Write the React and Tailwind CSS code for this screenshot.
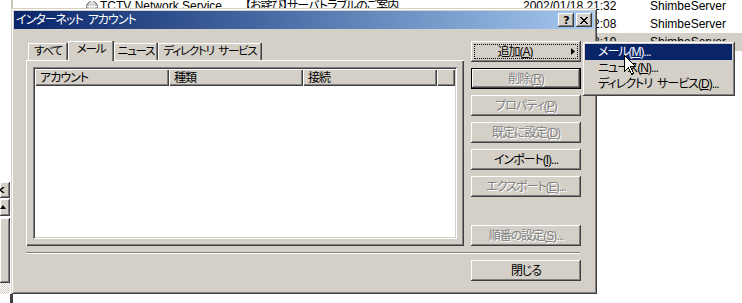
import React from 'react';

const ui = "font-['Liberation_Sans','Noto_Sans_CJK_JP',sans-serif] [font-feature-settings:'palt']";
const bevel = 'shadow-[inset_-1px_-1px_0_#404040,inset_1px_1px_0_#ffffff,inset_-2px_-2px_0_#808080,inset_2px_2px_0_#d4d0c8]';
const bevelDefault = 'shadow-[inset_0_0_0_1px_#000000,inset_-2px_-2px_0_#404040,inset_2px_2px_0_#ffffff,inset_-3px_-3px_0_#808080,inset_3px_3px_0_#d4d0c8]';

const Btn = ({ children, disabled, isDefault, focused, arrow, className = '' }) => (
  <div
    className={`relative flex h-[21px] w-[110px] shrink-0 items-center justify-center whitespace-nowrap bg-[#d4d0c8] text-[12px] leading-none ${
      isDefault ? bevelDefault : bevel
    } ${disabled ? 'text-[#808080] [text-shadow:1px_1px_0_#ffffff]' : 'text-black'} ${arrow ? 'pr-[22px]' : ''} ${className}`}
  >
    {focused && <div className="absolute inset-[3px] border border-dotted border-black" />}
    <span>{children}</span>
    {arrow && (
      <svg className="absolute right-[6px] top-[7px]" width="4" height="7" viewBox="0 0 4 7">
        <path d="M0 0 L4 3.5 L0 7 Z" fill="#000" />
      </svg>
    )}
  </div>
);

const Tab = ({ label, active, w }) => (
  <div
    className={`flex items-center justify-center whitespace-nowrap bg-[#d4d0c8] text-[11.5px] tracking-[-1.2px] text-black shadow-[inset_-1px_0_0_#404040,inset_-2px_0_0_#808080,inset_1px_1px_0_#ffffff] ${
      active ? 'relative z-10 mb-[-1px] h-[20px] pb-[2px]' : 'h-[17px]'
    } ${w}`}
  >
    {label}
  </div>
);

const HeaderCell = ({ label, w }) => (
  <div
    className={`flex h-full items-center pl-[5px] text-[12px] text-black shadow-[inset_1px_1px_0_#ffffff,inset_-1px_-1px_0_#404040,inset_-2px_-2px_0_#808080] ${w}`}
  >
    {label}
  </div>
);

const Row = ({ subject, date, from, selected, icon }) => (
  <div className={`flex h-[18px] items-center text-[12px] text-black ${selected ? 'bg-[#d4d0c8]' : ''}`}>
    <div className="w-[73px]" />
    <div className="flex w-[14px] items-center">
      {icon && (
        <svg width="12" height="11" viewBox="0 0 12 11">
          <ellipse cx="6" cy="5.5" rx="5.5" ry="5" fill="#b8b8b8" stroke="#6f6f6f" strokeWidth="1" />
          <path d="M1 5.5 H11 M6 0.5 V10.5" stroke="#ffffff" strokeWidth="1" />
          <ellipse cx="6" cy="5.5" rx="2.4" ry="5" fill="none" stroke="#ffffff" strokeWidth="1" />
        </svg>
      )}
    </div>
    <div className="w-[145px] whitespace-nowrap">TCTV Network Service</div>
    <div className="w-[278px] whitespace-nowrap tracking-[-1px]">{subject}</div>
    <div className="w-[127px] whitespace-nowrap">{date}</div>
    <div className="whitespace-nowrap">{from}</div>
  </div>
);

export default function App() {
  return (
    <div className={`relative h-[303px] w-[742px] overflow-hidden bg-white ${ui}`}>
      {/* background mail list */}
      <div className="absolute left-[13px] right-0 top-[-3px] flex flex-col">
        <Row icon subject="【お詫び】サーバトラブルのご案内" date="2002/01/18 21:32" from="ShimbeServer" />
        <Row subject="【ご案内】メンテナンスのお知らせ" date="2002/01/18 22:08" from="ShimbeServer" />
        <Row selected subject="【ご案内】サービス再開のお知らせ" date="2002/01/18 22:19" from="ShimbeServer" />
      </div>

      {/* background left pane */}
      <div className="absolute left-0 top-0 flex h-full w-[13px] flex-col">
        <div className="h-[182px] w-full border-r-2 border-[#c8c4bc] bg-white" />
        <div className={`relative h-[16px] w-[10px] bg-[#d4d0c8] ${bevel}`}>
          <svg className="absolute left-0 top-[5px]" width="5" height="6" viewBox="0 0 5 6">
            <path d="M4 0 L0 3 L4 6" stroke="#000" strokeWidth="1.5" fill="none" />
          </svg>
        </div>
        <div className={`relative mt-[1px] h-[17px] w-[10px] bg-[#d4d0c8] ${bevel}`}>
          <svg className="absolute left-0 top-[6px]" width="6" height="4" viewBox="0 0 6 4">
            <path d="M0 4 L3 0 L6 4 Z" fill="#000" />
          </svg>
        </div>
        <div className={`mt-[2px] h-[65px] w-[10px] bg-[#d4d0c8] ${bevel}`} />
        <div className="h-[11px] w-[10px] bg-[repeating-conic-gradient(#d4d0c8_0_25%,#ffffff_0_50%)] bg-[length:2px_2px]" />
        <div className="flex-1 border-r-[3px] border-[#404040] bg-white" />
      </div>

      {/* dialog */}
      <div className="absolute left-[11px] top-[8px] flex h-[286px] w-[586px] flex-col bg-[#d4d0c8] p-[3px] tracking-[-1px] shadow-[inset_1px_1px_0_#d4d0c8,inset_-1px_-1px_0_#404040,inset_2px_2px_0_#ffffff,inset_-2px_-2px_0_#808080]">
        <div className="flex h-[18px] items-center bg-linear-to-r from-[#0a246a] to-[#a6caf0] pl-[2px] pr-[2px]">
          <span className="whitespace-nowrap text-[12px] leading-none text-white">インターネット{'\u2002'}アカウント</span>
          <div className="ml-auto flex gap-[2px]">
            <div className={`flex h-[14px] w-[16px] items-center justify-center bg-[#d4d0c8] ${bevel}`}>
              <span className="font-['DejaVu_Sans',sans-serif] text-[11px] leading-none font-bold text-black">?</span>
            </div>
            <div className={`flex h-[14px] w-[16px] items-center justify-center bg-[#d4d0c8] ${bevel}`}>
              <svg width="8" height="7" viewBox="0 0 8 7" shapeRendering="crispEdges">
                <path d="M0.5 0 L7.5 7 M7.5 0 L0.5 7" stroke="#000" strokeWidth="1.8" />
              </svg>
            </div>
          </div>
        </div>

        <div className="flex flex-col pl-[12px] pt-[12px]">
          <div className="flex gap-[7px]">
            <div className="flex w-[438px] flex-col">
              <div className="flex h-[19px] items-end pl-[2px]">
                <Tab label="すべて" w="w-[40px]" />
                <Tab label="メール" w="w-[46px]" active />
                <Tab label="ニュース" w="w-[44px]" />
                <Tab label={`ディレクトリ\u2002サービス`} w="w-[104px]" />
              </div>
              <div className="h-[186px] p-[7px] shadow-[inset_1px_1px_0_#ffffff,inset_-1px_-1px_0_#404040,inset_-2px_-2px_0_#808080]">
                <div className="flex h-[172px] flex-col p-[2px] shadow-[inset_1px_1px_0_#808080,inset_-1px_-1px_0_#ffffff,inset_2px_2px_0_#404040,inset_-2px_-2px_0_#d4d0c8]">
                  <div className="flex h-[17px] bg-[#d4d0c8]">
                    <HeaderCell label="アカウント" w="w-[134px]" />
                    <HeaderCell label="種類" w="w-[134px]" />
                    <HeaderCell label="接続" w="w-[134px]" />
                    <HeaderCell label="" w="flex-1" />
                  </div>
                  <div className="flex-1 bg-white" />
                </div>
              </div>
            </div>

            <div className="flex h-[205px] w-[110px] flex-col gap-[6px]">
              <Btn focused arrow>追加(<u>A</u>)</Btn>
              <Btn disabled isDefault>削除(<u>R</u>)</Btn>
              <Btn disabled>プロパティ(<u>P</u>)</Btn>
              <Btn disabled>既定に設定(<u>D</u>)</Btn>
              <Btn>インポート(<u>I</u>)...</Btn>
              <Btn disabled>エクスポート(<u>E</u>)...</Btn>
              <Btn disabled className="mt-auto">順番の設定(<u>S</u>)...</Btn>
            </div>
          </div>

          <div className="mt-[6px] h-[2px] w-[554px] border-t border-b border-t-[#808080] border-b-white" />

          <div className="mt-[6px] flex w-[555px] justify-end">
            <Btn>閉じる</Btn>
          </div>
        </div>
      </div>

      {/* popup menu */}
      <div className="absolute left-[582px] top-[41px] flex h-[55px] w-[153px] flex-col bg-[#d4d0c8] p-[3px] tracking-[-1px] shadow-[inset_1px_1px_0_#d4d0c8,inset_-1px_-1px_0_#404040,inset_2px_2px_0_#ffffff,inset_-2px_-2px_0_#808080]">
        <div className="flex h-[16px] items-center whitespace-nowrap bg-[#0a246a] pl-[13px] text-[12px] leading-none text-white">
          メール(<u>M</u>)...
        </div>
        <div className="flex h-[16px] items-center whitespace-nowrap pl-[13px] text-[12px] leading-none text-black">
          ニュース(<u>N</u>)...
        </div>
        <div className="flex h-[16px] items-center whitespace-nowrap pl-[13px] text-[12px] leading-none text-black">
          ディレクトリ{'\u2002'}サービス(<u>D</u>)...
        </div>
      </div>

      {/* mouse cursor */}
      <svg className="absolute left-[624px] top-[55px]" width="12" height="20" viewBox="0 0 12 20" shapeRendering="crispEdges">
        <path d="M0.5 0.5 L0.5 16.5 L4.5 12.5 L7.5 19.5 L9.5 18.5 L6.5 11.5 L11.5 11.5 Z" fill="#fff" stroke="#000" strokeWidth="1" />
      </svg>
    </div>
  );
}
